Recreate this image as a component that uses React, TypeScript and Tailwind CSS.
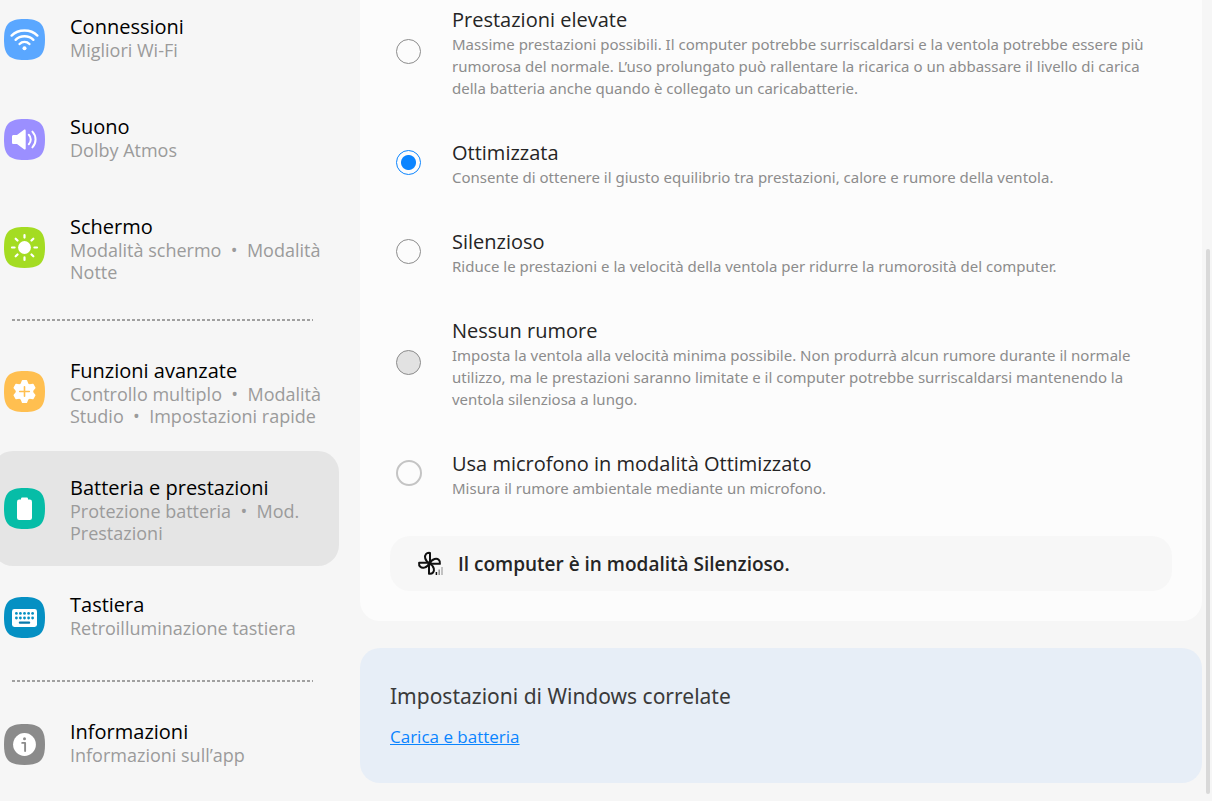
import { useState, type ReactNode } from "react";

interface NavItem {
  id: string;
  title: string;
  subtitle: string;
  color: string;
  glyph: ReactNode;
}

interface Mode {
  id: string;
  title: string;
  description: string;
  disabled?: boolean;
}

const connections: NavItem[] = [
  {
    id: "connessioni",
    title: "Connessioni",
    subtitle: "Migliori Wi-Fi",
    color: "#5aa7ff",
    glyph: (
      <g fill="none" stroke="#fff" strokeWidth="2.4" strokeLinecap="round">
        <path d="M7.6 16.6C14.4 9.8 26.6 9.8 33.4 16.6" />
        <path d="M11.6 20.8C16.2 16 24.8 16 29.4 20.8" />
        <path d="M15.6 25C18.2 22.2 22.8 22.2 25.4 25" />
        <circle cx="20.5" cy="29.2" r="2" fill="#fff" stroke="none" />
      </g>
    ),
  },
  {
    id: "suono",
    title: "Suono",
    subtitle: "Dolby Atmos",
    color: "#9b8fff",
    glyph: (
      <>
        <path
          d="M9.6 16H13L20 10.8C20.8 10.2 21.7 10.6 21.7 11.6V29.4C21.7 30.4 20.8 30.8 20 30.2L13 25H9.6C8.6 25 8 24.4 8 23.4V17.6C8 16.6 8.6 16 9.6 16Z"
          fill="#fff"
        />
        <g fill="none" stroke="#fff" strokeWidth="2" strokeLinecap="round">
          <path d="M24.8 15.8C27.4 18.4 27.4 22.6 24.8 25.2" />
          <path d="M28.4 12.6C32.6 17 32.6 24 28.4 28.4" />
        </g>
      </>
    ),
  },
  {
    id: "schermo",
    title: "Schermo",
    subtitle: "Modalità schermo  •  Modalità Notte",
    color: "#a4dc22",
    glyph: (
      <>
        <circle cx="20.5" cy="20.5" r="6.4" fill="#fff" />
        <path
          d="M20.5 8V10.6M20.5 30.4V33M8 20.5H10.6M30.4 20.5H33M11.7 11.7L13.5 13.5M27.5 27.5L29.3 29.3M11.7 29.3L13.5 27.5M27.5 13.5L29.3 11.7"
          stroke="#fff"
          strokeWidth="2.2"
          strokeLinecap="round"
        />
      </>
    ),
  },
];

const features: NavItem[] = [
  {
    id: "funzioni",
    title: "Funzioni avanzate",
    subtitle: "Controllo multiplo  •  Modalità Studio  •  Impostazioni rapide",
    color: "#ffbf50",
    glyph: (
      <>
        <g fill="#fff" stroke="#fff" strokeWidth="1.6" strokeLinejoin="round">
          <circle cx="20.5" cy="20.5" r="8" />
          <path d="M18.6 9.8H22.4L24 14V27L22.4 31.2H18.6L17 27V14Z" />
          <path d="M18.6 9.8H22.4L24 14V27L22.4 31.2H18.6L17 27V14Z" transform="rotate(60 20.5 20.5)" />
          <path d="M18.6 9.8H22.4L24 14V27L22.4 31.2H18.6L17 27V14Z" transform="rotate(120 20.5 20.5)" />
        </g>
        <path d="M20.5 15.7V25.3M15.7 20.5H25.3" stroke="#ffbf50" strokeWidth="1.6" strokeLinecap="round" />
      </>
    ),
  },
  {
    id: "batteria",
    title: "Batteria e prestazioni",
    subtitle: "Protezione batteria  •  Mod. Prestazioni",
    color: "#06bda7",
    glyph: (
      <g fill="#fff">
        <rect x="17" y="9.4" width="7" height="5" rx="1.2" />
        <rect x="13" y="11.6" width="15" height="20.4" rx="2.2" />
      </g>
    ),
  },
  {
    id: "tastiera",
    title: "Tastiera",
    subtitle: "Retroilluminazione tastiera",
    color: "#0590c3",
    glyph: (
      <>
        <rect x="8" y="12" width="25" height="18" rx="2.4" fill="#fff" />
        <g fill="#0590c3">
          {[12.4, 16.4, 20.5, 24.6, 28.6].map((x) => (
            <g key={x}>
              <circle cx={x} cy="16.4" r="1.4" />
              <circle cx={x} cy="21" r="1.4" />
            </g>
          ))}
          <rect x="14.8" y="24.6" width="11.4" height="2.2" rx="1" fill="#0a78ab" />
        </g>
      </>
    ),
  },
];

const about: NavItem[] = [
  {
    id: "informazioni",
    title: "Informazioni",
    subtitle: "Informazioni sull’app",
    color: "#8b8b8b",
    glyph: (
      <>
        <circle cx="20.5" cy="20.5" r="11.4" fill="#fff" />
        <circle cx="20.5" cy="14.8" r="1.5" fill="#8b8b8b" />
        <path d="M18.2 18.9H21.1V27" fill="none" stroke="#8b8b8b" strokeWidth="1.9" strokeLinecap="round" strokeLinejoin="round" />
      </>
    ),
  },
];

const modes: Mode[] = [
  {
    id: "elevate",
    title: "Prestazioni elevate",
    description:
      "Massime prestazioni possibili. Il computer potrebbe surriscaldarsi e la ventola potrebbe essere più rumorosa del normale. L’uso prolungato può rallentare la ricarica o un abbassare il livello di carica della batteria anche quando è collegato un caricabatterie.",
  },
  {
    id: "ottimizzata",
    title: "Ottimizzata",
    description: "Consente di ottenere il giusto equilibrio tra prestazioni, calore e rumore della ventola.",
  },
  {
    id: "silenzioso",
    title: "Silenzioso",
    description: "Riduce le prestazioni e la velocità della ventola per ridurre la rumorosità del computer.",
  },
  {
    id: "nessun-rumore",
    title: "Nessun rumore",
    description:
      "Imposta la ventola alla velocità minima possibile. Non produrrà alcun rumore durante il normale utilizzo, ma le prestazioni saranno limitate e il computer potrebbe surriscaldarsi mantenendo la ventola silenziosa a lungo.",
    disabled: true,
  },
];

const NavLink = ({ item, active, onSelect }: { item: NavItem; active: boolean; onSelect: (id: string) => void }) => (
  <a
    href={`#${item.id}`}
    aria-current={active ? "page" : undefined}
    onClick={() => onSelect(item.id)}
    className={`flex min-h-[98px] gap-[25px] rounded-[21px] pt-[25px] pr-3 pb-[22px] pl-3 ${active ? "bg-[#e5e5e5]" : ""}`}
  >
    <svg viewBox="0 0 41 41" className="-mt-[3px] h-[41px] w-[41px] shrink-0 self-center" aria-hidden="true">
      <path
        d="M20.5 0C36 0 41 5 41 20.5C41 36 36 41 20.5 41C5 41 0 36 0 20.5C0 5 5 0 20.5 0Z"
        fill={item.color}
      />
      {item.glyph}
    </svg>
    <span className="flex flex-col">
      <span className="text-[20px] leading-6 text-black">{item.title}</span>
      <span className="text-[18px] leading-[22px] whitespace-pre-wrap text-[#9b9b9b]">{item.subtitle}</span>
    </span>
  </a>
);

const Divider = () => (
  <div role="separator" className="flex h-[25px] items-center pr-[26px] pl-5">
    <div className="h-[2px] w-full bg-[repeating-linear-gradient(90deg,#a0a0a0_0_3px,transparent_3px_5px)]" />
  </div>
);

const FanIcon = () => (
  <svg viewBox="0 0 26 26" className="h-[26px] w-[26px] shrink-0" aria-hidden="true">
    <g fill="none" stroke="#111" strokeWidth="2" strokeLinejoin="round">
      {[0, 90, 180, 270].map((angle) => (
        <path
          key={angle}
          d="M13 12.3V1.9C9.4 1.4 7.4 3.8 8.2 7.2C8.7 9.4 10.4 11.2 13 12.3Z"
          transform={`rotate(${angle} 12.5 12.3)`}
        />
      ))}
    </g>
    <path d="M19.4 21V24" stroke="#111" strokeWidth="1.5" />
    <path d="M22.2 18.5V24" stroke="#8d8d8d" strokeWidth="1.5" />
    <path d="M25 16V24" stroke="#b0b0b0" strokeWidth="1.5" />
  </svg>
);

export default function App() {
  const [page, setPage] = useState("batteria");
  const [mode, setMode] = useState("ottimizzata");
  const [useMic, setUseMic] = useState(false);

  const renderLinks = (items: NavItem[]) =>
    items.map((item) => <NavLink key={item.id} item={item} active={item.id === page} onSelect={setPage} />);

  return (
    <div className="flex min-h-screen overflow-hidden bg-[#f6f6f6] font-['Open_Sans','Noto_Sans',sans-serif]">
      {/* The list is scrolled a little, so its first row starts above the window */}
      <nav className="-mt-[10px] -ml-2 flex w-[347px] shrink-0 flex-col gap-[2px]">
        {renderLinks(connections)}
        <Divider />
        {renderLinks(features)}
        <Divider />
        {renderLinks(about)}
      </nav>

      <main className="ml-[21px] min-w-0 flex-1">
        <section className="rounded-b-[20px] bg-[#fcfcfc] px-[30px] pt-[7px] pb-[30px]">
          <div className="flex flex-col gap-[41px] pl-[6px]">
            {modes.map((m) => (
              <label key={m.id} htmlFor={m.id} className="flex items-center">
                <input
                  id={m.id}
                  type="radio"
                  name="mode"
                  checked={mode === m.id}
                  disabled={m.disabled}
                  onChange={() => setMode(m.id)}
                  className="mr-[31px] mb-1 h-[25px] w-[25px] shrink-0 appearance-none rounded-full border border-[#8c8c8c] bg-[#fcfcfc] checked:border-[#0a84ff] checked:bg-[radial-gradient(circle,#0a84ff_7px,transparent_8px)] disabled:bg-[#e2e2e2]"
                />
                <span className="flex flex-col">
                  <span className="text-[20px] leading-[26px] text-[#252525]">{m.title}</span>
                  <span className="font-['Noto_Sans',sans-serif] text-[15px] leading-[22px] text-[#8c8c8c]">
                    {m.description}
                  </span>
                </span>
              </label>
            ))}
            <label htmlFor="microfono" className="flex items-center">
              <input
                id="microfono"
                type="checkbox"
                checked={useMic}
                onChange={(e) => setUseMic(e.target.checked)}
                className="mr-[30px] mb-1 h-[26px] w-[26px] shrink-0 appearance-none rounded-full border-2 border-[#c4c4c4] checked:border-[#0a84ff] checked:bg-[#0a84ff]"
              />
              <span className="flex flex-col">
                <span className="text-[20px] leading-[26px] text-[#252525]">Usa microfono in modalità Ottimizzato</span>
                <span className="font-['Noto_Sans',sans-serif] text-[15px] leading-[22px] text-[#8c8c8c]">
                  Misura il rumore ambientale mediante un microfono.
                </span>
              </span>
            </label>
          </div>

          <div className="mt-[37px] flex h-[55px] items-center gap-[15px] rounded-[20px] bg-[#f7f7f7] px-[27px]">
            <FanIcon />
            <p className="text-[19px] leading-6 font-semibold text-[#252525]">Il computer è in modalità Silenzioso.</p>
          </div>
        </section>

        <section className="mt-[27px] rounded-[20px] bg-[#e7eef7] px-[30px] pt-8 pb-[34px]">
          <h2 className="font-['Noto_Sans',sans-serif] text-[21px] leading-8 text-[#3a3a3a]">
            Impostazioni di Windows correlate
          </h2>
          <a href="#carica" className="mt-[13px] inline-block text-[17px] leading-6 text-[#0a84ff] underline">
            Carica e batteria
          </a>
        </section>
      </main>

      <div className="flex w-[10px] shrink-0 flex-col pt-[249px] pr-[2px] pb-[7px] pl-1" aria-hidden="true">
        <div className="grow rounded-full bg-[#d9d9d9]" />
      </div>
    </div>
  );
}
